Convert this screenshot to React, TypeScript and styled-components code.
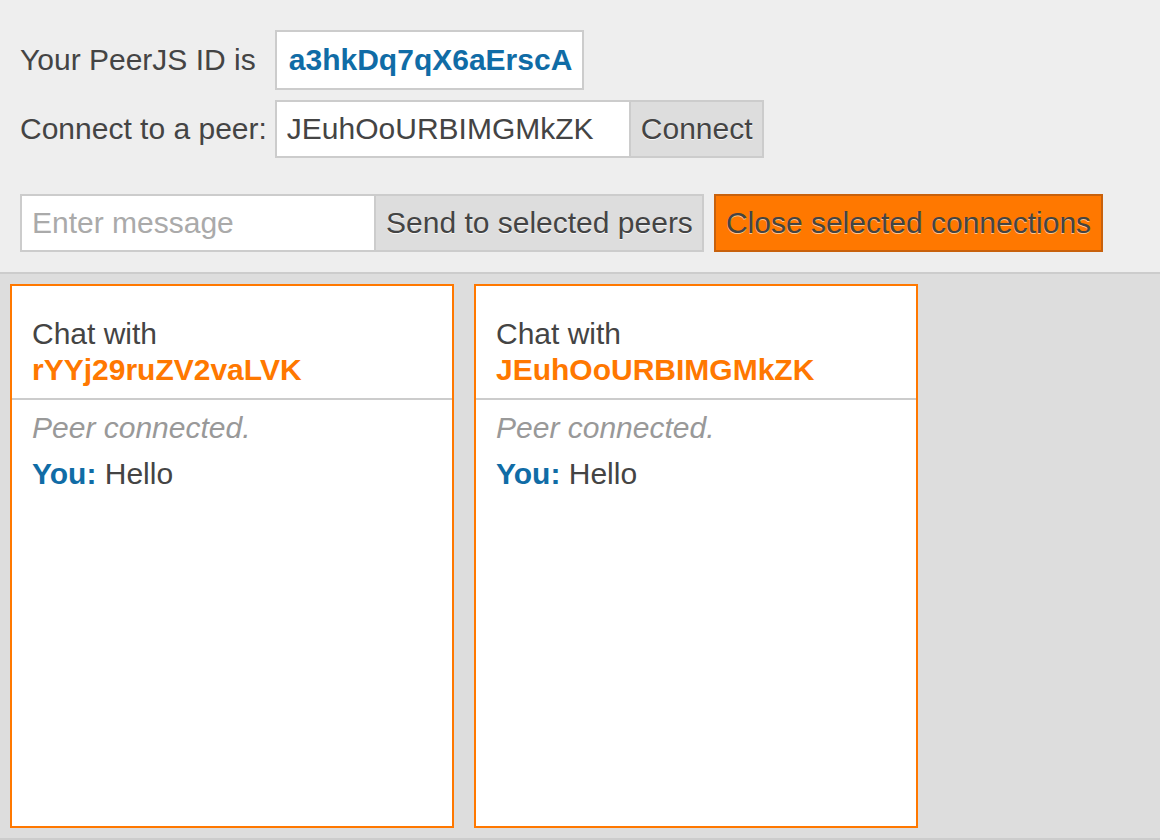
import React from "react";
import styled, { createGlobalStyle } from "styled-components";

const GlobalStyle = createGlobalStyle`
  html, body { margin: 0; padding: 0; }
  body {
    background: #dddddd;
    font-family: "Liberation Sans", Arial, Helvetica, sans-serif;
    font-size: 30px;
    color: #444;
  }
  * { box-sizing: border-box; }
`;

const Page = styled.div`
  width: 1160px;
  height: 840px;
  display: flex;
  flex-direction: column;
  background: #dddddd;
  border-bottom: 2px solid #cccccc;
`;

const Actions = styled.div`
  background: #eeeeee;
  border-bottom: 2px solid #cccccc;
  padding: 30px 20px 20px;
  display: flex;
  flex-direction: column;
`;

const IdGrid = styled.div`
  display: grid;
  grid-template-columns: max-content max-content;
  column-gap: 8px;
  row-gap: 10px;
  align-items: center;
`;

const Label = styled.span`
  line-height: 36px;
  color: #444;
`;

const IdBox = styled.span`
  justify-self: start;
  display: inline-block;
  height: 60px;
  line-height: 56px;
  padding: 0 10px 0 12px;
  border: 2px solid #cccccc;
  background: #ffffff;
  color: #106ca6;
  font-weight: bold;
`;

const Inline = styled.div`
  display: flex;
  align-items: stretch;
`;

const TextInput = styled.input`
  width: 356px;
  height: 58px;
  border: 2px solid #cccccc;
  background: #ffffff;
  font-family: inherit;
  font-size: 30px;
  color: #444;
  padding: 0 10px;
  outline: none;
  &::placeholder {
    color: #aaaaaa;
  }
`;

const GrayButton = styled.button`
  height: 58px;
  border: 2px solid #cccccc;
  border-left: none;
  background: #dddddd;
  font-family: inherit;
  font-size: 30px;
  color: #444;
  padding: 0 9px 0 10px;
  text-shadow: 0 1px 0 rgba(255, 255, 255, 0.8);
  cursor: pointer;
`;

const OrangeButton = styled.button`
  height: 58px;
  margin-left: 10px;
  border: 2px solid #c8610c;
  background: #ff7800;
  font-family: inherit;
  font-size: 30px;
  color: #444;
  padding: 0 10px;
  text-shadow: 0 1px 0 rgba(255, 220, 180, 0.8);
  cursor: pointer;
`;

const MessageRow = styled(Inline)`
  margin-top: 36px;
`;

const Wrap = styled.div`
  flex: 1;
  display: flex;
  flex-wrap: wrap;
  align-content: flex-start;
`;

const Card = styled.div`
  width: 444px;
  height: 544px;
  margin: 10px;
  background: #ffffff;
  border: 2px solid #ff7800;
  display: flex;
  flex-direction: column;
`;

const CardHeader = styled.div`
  padding: 30px 20px 10px;
  border-bottom: 2px solid #cccccc;
  line-height: 36px;
`;

const PeerName = styled.div`
  color: #ff7800;
  font-weight: bold;
`;

const Messages = styled.div`
  padding: 10px 20px;
  display: flex;
  flex-direction: column;
  gap: 10px;
  line-height: 36px;
`;

const Notice = styled.div`
  color: #999999;
  font-style: italic;
`;

const Line = styled.div`
  color: #444;
`;

const Me = styled.span`
  color: #106ca6;
  font-weight: bold;
`;

const peers = ["rYYj29ruZV2vaLVK", "JEuhOoURBIMGMkZK"];

export default function App() {
  return (
    <>
      <GlobalStyle />
      <Page>
        <Actions>
          <IdGrid>
            <Label>Your PeerJS ID is</Label>
            <IdBox>a3hkDq7qX6aErscA</IdBox>
            <Label>Connect to a peer:</Label>
            <Inline>
              <TextInput defaultValue="JEuhOoURBIMGMkZK" />
              <GrayButton>Connect</GrayButton>
            </Inline>
          </IdGrid>
          <MessageRow>
            <TextInput placeholder="Enter message" />
            <GrayButton>Send to selected peers</GrayButton>
            <OrangeButton>Close selected connections</OrangeButton>
          </MessageRow>
        </Actions>
        <Wrap>
          {peers.map((p) => (
            <Card key={p}>
              <CardHeader>
                Chat with
                <PeerName>{p}</PeerName>
              </CardHeader>
              <Messages>
                <Notice>Peer connected.</Notice>
                <Line>
                  <Me>You:</Me> Hello
                </Line>
              </Messages>
            </Card>
          ))}
        </Wrap>
      </Page>
    </>
  );
}
